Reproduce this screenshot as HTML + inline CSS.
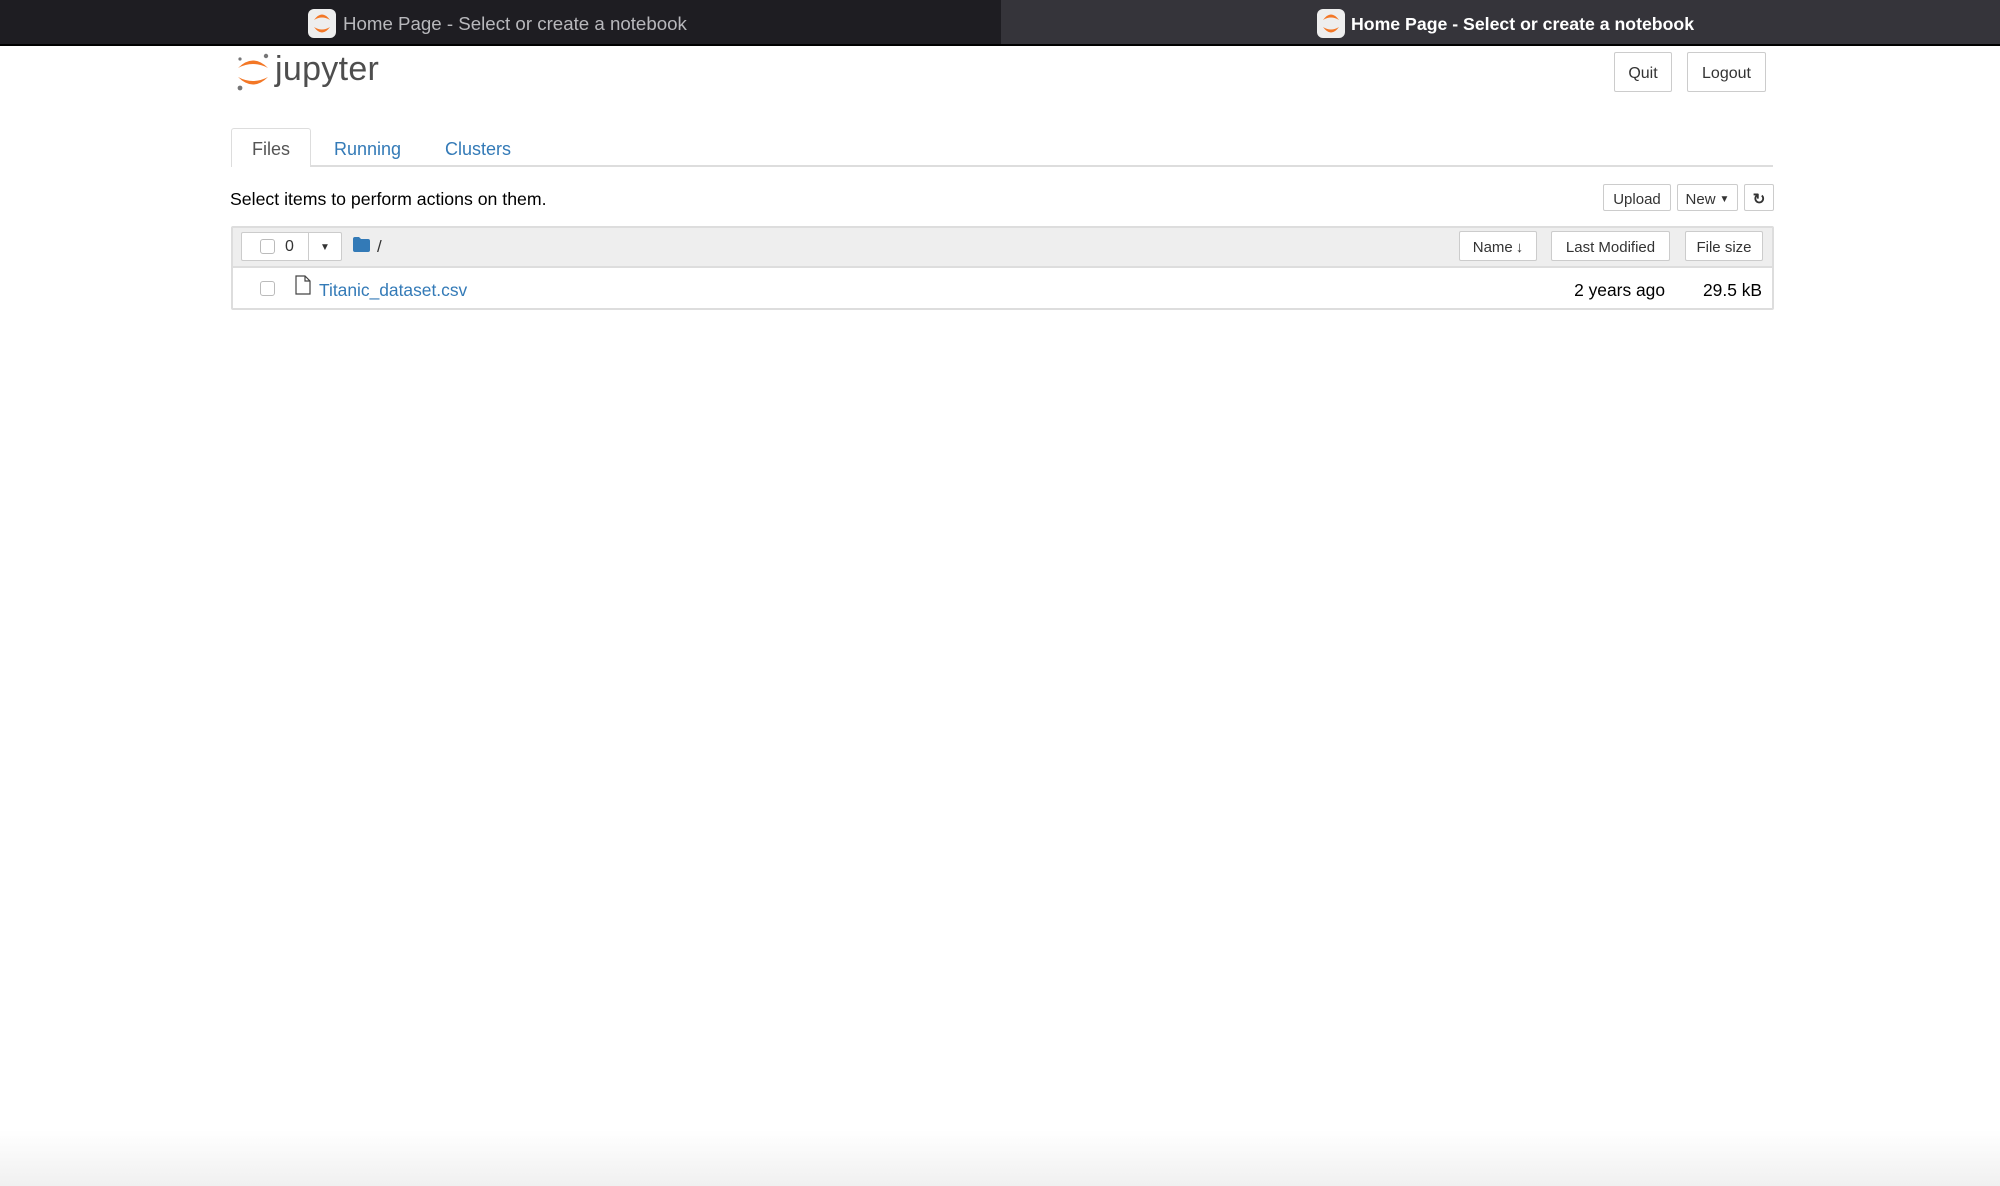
<!DOCTYPE html>
<html><head><meta charset="utf-8"><style>
*{box-sizing:border-box;margin:0;padding:0}
body{width:2000px;height:1186px;overflow:hidden;background:#fff;font-family:"Liberation Sans",Arial,sans-serif;position:relative;color:#000}
.abs{position:absolute}
.tab{position:absolute;top:0;height:46px;border-bottom:2px solid #000}
.ico{position:absolute;top:9px;width:28px;height:29px;border-radius:6px;background:#eee}
.ttl{position:absolute;top:13px;white-space:nowrap}
.btn{position:absolute;border:1px solid #ccc;border-radius:2px;background:#fff;font-size:16px;color:#333;display:flex;align-items:center;justify-content:center;white-space:nowrap;padding-top:3px}
.sm{font-size:15px}
.chk{position:absolute;width:15px;height:15px;border:1px solid #bbb;border-radius:3px;background:#fff}
</style></head><body>
<div class="tab" style="left:0;width:1001px;background:#1e1d22"></div>
<div class="tab" style="left:1001px;width:999px;background:#35343a"></div>
<div class="ico" style="left:308px"><svg width="28" height="29" viewBox="0 0 28 29"><path d="M6 11 Q14 0 22 11 Q14 6 6 11Z M6 18 Q14 29 22 18 Q14 23 6 18Z" fill="#f37726"/></svg></div>
<div class="ttl" style="left:343px;color:#b8b8bc;font-size:18.7px">Home Page - Select or create a notebook</div>
<div class="ico" style="left:1317px"><svg width="28" height="29" viewBox="0 0 28 29"><path d="M6 11 Q14 0 22 11 Q14 6 6 11Z M6 18 Q14 29 22 18 Q14 23 6 18Z" fill="#f37726"/></svg></div>
<div class="ttl" style="left:1351px;color:#fff;font-weight:bold;font-size:17.7px;top:14px">Home Page - Select or create a notebook</div>

<svg class="abs" style="left:234px;top:52px" width="38" height="40" viewBox="0 0 38 40">
<path d="M4 16 Q19 1 34 16 Q19 8 4 16Z" fill="#f37726"/>
<path d="M4 25 Q19 40 34 25 Q19 33 4 25Z" fill="#f37726"/>
<circle cx="32" cy="4" r="2.2" fill="#767677"/><circle cx="6" cy="7" r="1.6" fill="#767677"/><circle cx="6" cy="36" r="2.4" fill="#767677"/>
</svg>
<div class="abs" style="left:275px;top:50px;font-size:34px;color:#4e4e4e;letter-spacing:0.3px">jupyter</div>

<div class="btn" style="left:1614px;top:52px;width:58px;height:40px">Quit</div>
<div class="btn" style="left:1687px;top:52px;width:79px;height:40px">Logout</div>

<div class="abs" style="left:231px;top:165px;width:1542px;height:2px;background:#ddd"></div>
<div class="abs" style="left:231px;top:128px;width:80px;height:39px;border:1px solid #ddd;border-bottom:none;background:#fff;border-radius:3px 3px 0 0"></div>
<div class="abs" style="left:252px;top:139px;font-size:18px;color:#555">Files</div>
<div class="abs" style="left:334px;top:139px;font-size:18px;color:#337ab7">Running</div>
<div class="abs" style="left:445px;top:139px;font-size:18px;color:#337ab7">Clusters</div>

<div class="abs" style="left:230px;top:189px;font-size:17.7px;color:#000">Select items to perform actions on them.</div>
<div class="btn sm" style="left:1603px;top:184px;width:68px;height:27px">Upload</div>
<div class="btn sm" style="left:1677px;top:184px;width:61px;height:27px">New <span style="font-size:10px;margin-left:4px">▼</span></div>
<div class="btn sm" style="left:1744px;top:184px;width:30px;height:27px;font-weight:bold">↻</div>

<div class="abs" style="left:231px;top:226px;width:1543px;height:84px;border:2px solid #ddd;border-radius:2px"></div>
<div class="abs" style="left:233px;top:228px;width:1539px;height:40px;background:#eee;border-bottom:2px solid #ddd"></div>
<div class="btn" style="left:241px;top:232px;width:101px;height:29px;justify-content:flex-start"></div>
<div class="abs" style="left:308px;top:233px;width:1px;height:27px;background:#ccc"></div>
<div class="chk" style="left:260px;top:239px"></div>
<div class="abs" style="left:285px;top:238px;font-size:16px;color:#333">0</div>
<div class="abs" style="left:320px;top:242px;font-size:10px;color:#333">▼</div>
<svg class="abs" style="left:353px;top:237px" width="17" height="15" viewBox="0 0 17 15"><path d="M0 2 Q0 0 2 0 H6 L8 2 H15 Q17 2 17 4 V13 Q17 15 15 15 H2 Q0 15 0 13Z" fill="#337ab7"/></svg>
<div class="abs" style="left:377px;top:237px;font-size:17px;color:#333">/</div>

<div class="btn sm" style="left:1459px;top:231px;width:78px;height:30px">Name <span style="font-weight:bold;margin-left:3px">↓</span></div>
<div class="btn sm" style="left:1551px;top:231px;width:119px;height:30px">Last Modified</div>
<div class="btn sm" style="left:1685px;top:231px;width:78px;height:30px">File size</div>

<div class="chk" style="left:260px;top:281px"></div>
<svg class="abs" style="left:295px;top:275px" width="16" height="20" viewBox="0 0 16 20"><path d="M1 1 H10 L15 6 V19 H1Z M10 1 V6 H15" fill="#fff" stroke="#444" stroke-width="1.2"/></svg>
<div class="abs" style="left:319px;top:280px;font-size:17.4px;color:#337ab7">Titanic_dataset.csv</div>
<div class="abs" style="left:1553px;top:280px;font-size:17.4px;color:#000;width:112px;text-align:right">2 years ago</div>
<div class="abs" style="left:1660px;top:280px;font-size:17.4px;color:#000;width:102px;text-align:right">29.5 kB</div>

<div class="abs" style="left:0;top:1130px;width:2000px;height:56px;background:linear-gradient(#fff,#f0f0f0)"></div>
</body></html>
